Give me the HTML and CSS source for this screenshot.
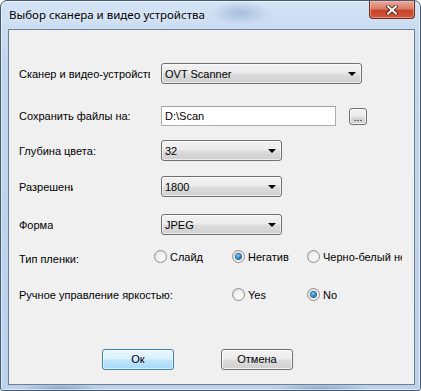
FILE: index.html
```html
<!DOCTYPE html>
<html lang="ru">
<head>
  <meta charset="UTF-8" />
  <title>Выбор сканера и видео устройства</title>
  <link rel="stylesheet" href="styles.css">
</head>
<body>
  <div class="window">
    <div class="titlebar">
      <span class="title">Выбор сканера и видео устройства</span>
      <div class="close">
        <svg width="12" height="10" viewBox="0 0 12 10">
          <path d="M2 1.5 L10 8.5 M10 1.5 L2 8.5" stroke="#3a1a14" stroke-width="3.6" stroke-linecap="square"/>
          <path d="M2 1.5 L10 8.5 M10 1.5 L2 8.5" stroke="#ffffff" stroke-width="2" stroke-linecap="square"/>
        </svg>
      </div>
    </div>

    <div class="client">
      <div class="row row-scanner">
        <span class="lbl lbl-scanner">Сканер и видео-устройство</span>
        <div class="combo combo-wide"><span>OVT Scanner</span><i class="arrow"></i></div>
      </div>

      <div class="row row-path">
        <span class="lbl">Сохранить файлы на:</span>
        <div class="textbox">D:\Scan</div>
        <div class="btn btn-browse">...</div>
      </div>

      <div class="row row-depth">
        <span class="lbl">Глубина цвета:</span>
        <div class="combo"><span>32</span><i class="arrow"></i></div>
      </div>

      <div class="row row-dpi">
        <span class="lbl"><span class="clip clip-dpi">Разрешение</span></span>
        <div class="combo"><span>1800</span><i class="arrow"></i></div>
      </div>

      <div class="row row-format">
        <span class="lbl"><span class="clip clip-format">Формат</span></span>
        <div class="combo"><span>JPEG</span><i class="arrow"></i></div>
      </div>

      <div class="row row-film">
        <span class="lbl lbl-film">Тип пленки:</span>
        <label class="opt opt-a"><i class="radio"></i>Слайд</label>
        <label class="opt opt-b"><i class="radio checked"></i>Негатив</label>
        <label class="opt opt-c"><i class="radio"></i>Черно-белый негатив</label>
      </div>

      <div class="row row-bright">
        <span class="lbl lbl-bright">Ручное управление яркостью:</span>
        <label class="opt opt-b"><i class="radio"></i>Yes</label>
        <label class="opt opt-b"><i class="radio checked"></i>No</label>
      </div>

      <div class="buttons">
        <div class="btn btn-default">Ок</div>
        <div class="btn">Отмена</div>
      </div>
    </div>
  </div>
</body>
</html>
```

FILE: styles.css
```css
body {
  margin: 0;
  background: #ffffff;
  font-family: "Liberation Sans", Arial, sans-serif;
  font-size: 11px;
  color: #000;
}

.window {
  width: 421px;
  height: 391px;
  box-sizing: border-box;
  border: 1px solid #47596f;
  border-radius: 7px 7px 3px 3px;
  padding: 0 5px 5px 7px;
  background:
    radial-gradient(ellipse 30px 12px at 240px 12px, rgba(120, 150, 190, 0.45), transparent),
    radial-gradient(ellipse 40px 6px at 60px 388px, rgba(90, 120, 160, 0.5), transparent),
    radial-gradient(ellipse 50px 6px at 320px 388px, rgba(90, 120, 160, 0.45), transparent),
    linear-gradient(#d3e3f5, #c0d5ee 60px, #bcd2ec);
  box-shadow: inset 0 0 0 1px rgba(255, 255, 255, 0.55);
}

.titlebar {
  height: 28px;
  display: flex;
  justify-content: space-between;
  align-items: flex-start;
}

.title {
  font-family: "Noto Sans", "Open Sans", sans-serif;
  font-size: 11.5px;
  line-height: 28px;
  padding-left: 1px;
  color: #000;
  text-shadow: 0 0 6px rgba(255, 255, 255, 0.9);
}

.close {
  width: 46px;
  height: 18px;
  box-sizing: border-box;
  border: 1px solid #6b2a1c;
  border-top: none;
  border-radius: 0 0 4px 4px;
  background: linear-gradient(#e9a998 0%, #db7e69 45%, #c8452c 55%, #d2553a 100%);
  box-shadow: inset 0 0 0 1px rgba(255, 200, 190, 0.5);
  display: flex;
  align-items: center;
  justify-content: center;
}

.client {
  height: 356px;
  box-sizing: border-box;
  border: 1px solid #6f7f93;
  background: #f0f0f0;
  padding: 33px 0 0 10px;
}

.row {
  display: flex;
  align-items: center;
  height: 21px;
  white-space: nowrap;
}
.row-path { margin-top: 22px; height: 20px; }
.row-depth { margin-top: 14px; }
.row-dpi { margin-top: 15px; }
.row-format { margin-top: 17px; }
.row-film { margin-top: 15px; height: 13px; }
.row-bright { margin-top: 25px; height: 13px; }

.lbl {
  width: 142px;
  flex: none;
  overflow: hidden;
}
.lbl-scanner { width: 131px; margin-right: 11px; }
.clip { display: inline-block; overflow: hidden; vertical-align: top; }
.clip-dpi { width: 54px; }
.clip-format { width: 34px; }
.lbl-film { width: 135px; padding-top: 4px; }
.lbl-bright { width: 213px; }

.combo {
  width: 121px;
  height: 21px;
  box-sizing: border-box;
  border: 1px solid #707070;
  border-radius: 3px;
  background: linear-gradient(#f2f2f2 0%, #ebebeb 48%, #dddddd 52%, #cfcfcf 100%);
  box-shadow: inset 0 0 0 1px rgba(255, 255, 255, 0.6);
  display: flex;
  align-items: center;
  justify-content: space-between;
  padding: 0 4px 0 3px;
}
.combo-wide { width: 201px; }

.arrow {
  width: 0;
  height: 0;
  border-left: 4px solid transparent;
  border-right: 4px solid transparent;
  border-top: 4px solid #000;
  margin-right: 1px;
}

.textbox {
  width: 175px;
  height: 20px;
  box-sizing: border-box;
  border: 1px solid #abadb3;
  border-top-color: #a0a0a0;
  background: #fff;
  padding: 0 3px;
  line-height: 18px;
  margin-right: 13px;
}

.btn {
  width: 72px;
  height: 21px;
  box-sizing: border-box;
  border: 1px solid #707070;
  border-radius: 3px;
  background: linear-gradient(#f2f2f2 0%, #ebebeb 48%, #dddddd 52%, #cfcfcf 100%);
  box-shadow: inset 0 0 0 1px rgba(255, 255, 255, 0.7);
  text-align: center;
  line-height: 19px;
}
.btn-browse {
  width: 18px;
  height: 17px;
  line-height: 17px;
  font-size: 10px;
  margin-top: 1px;
}
.btn-default {
  border-color: #3c7fb1;
  background: linear-gradient(#eaf6fd 0%, #d9f0fc 48%, #bee6fd 52%, #a7d9f5 100%);
  box-shadow: inset 0 0 0 1px rgba(255, 255, 255, 0.6);
}

.opt {
  display: flex;
  align-items: center;
  flex: none;
  overflow: hidden;
}
.opt-a { width: 78px; }
.opt-b { width: 75px; }
.opt-c { width: 95px; }

.radio {
  width: 13px;
  height: 13px;
  box-sizing: border-box;
  flex: none;
  border-radius: 50%;
  border: 1px solid #8e8f8f;
  background: radial-gradient(circle at 60% 65%, #ffffff 0%, #f2f2f2 40%, #d4d4d4 100%);
  margin-right: 3px;
  position: relative;
}
.radio.checked::after {
  content: "";
  position: absolute;
  left: 3px;
  top: 3px;
  width: 5px;
  height: 5px;
  border-radius: 50%;
  background: radial-gradient(circle at 40% 35%, #8fd6f8 0%, #2a8fcf 45%, #0c3f72 100%);
  box-shadow: 0 0 0 1px #2c5f8e;
}

.buttons {
  display: flex;
  gap: 47px;
  margin-top: 48px;
  padding-left: 83px;
}
```
